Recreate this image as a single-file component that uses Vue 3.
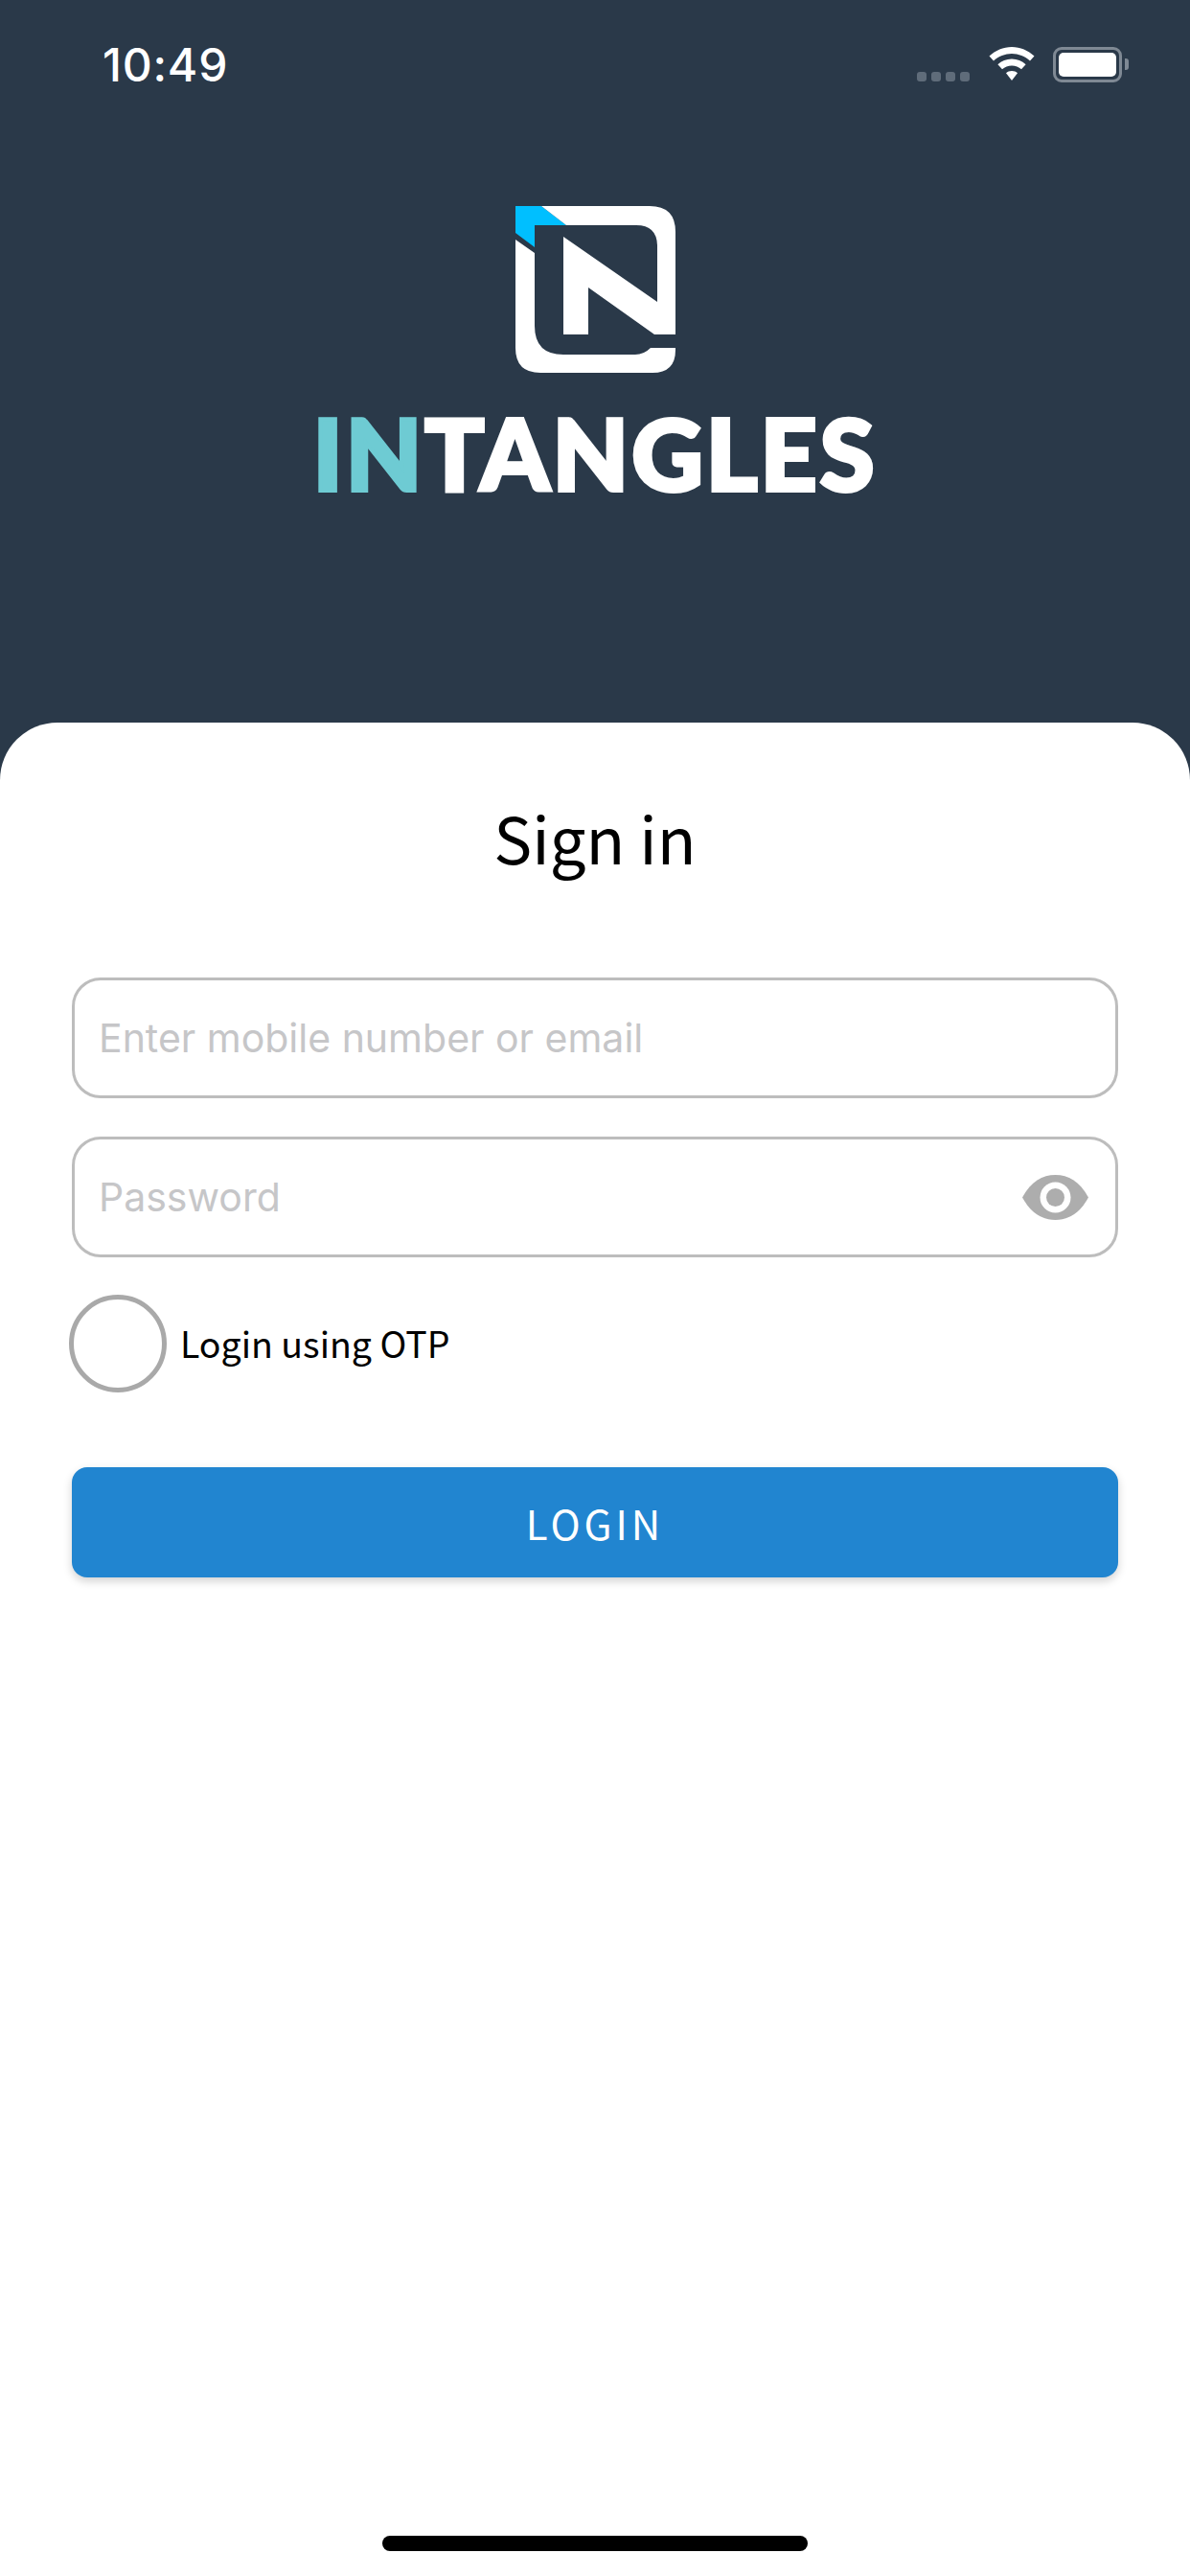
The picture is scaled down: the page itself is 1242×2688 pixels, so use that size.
<script setup>
const fields = [
  { placeholder: 'Enter mobile number or email', eye: false },
  { placeholder: 'Password', eye: true }
];
</script>

<template>
  <div class="screen">
    <header class="head">
      <div class="status">
        <span class="time">10:49</span>
        <div class="status-icons">
          <div class="signal"><i></i><i></i><i></i><i></i></div>
          <svg class="wifi" width="48" height="36" viewBox="0 0 48 36">
            <path fill="#fff" d="M24 0C33 0 41 3.600 47.500 9.500L43 14.500C37.800 9.800 31.200 7 24 7S10.200 9.800 5 14.500L.5 9.500C7 3.600 15 0 24 0Z" />
            <path fill="#fff" d="M24 12.500C29.600 12.500 34.700 14.600 38.600 18.200L34 23.200C31.300 20.800 27.800 19.400 24 19.400S16.700 20.800 14 23.200L9.400 18.200C13.300 14.600 18.400 12.500 24 12.500Z" />
            <path fill="#fff" d="M24 25C26.400 25 28.400 25.800 30 27.300L24 35L18 27.300C19.600 25.800 21.600 25 24 25Z" />
          </svg>
          <div class="battery"><span class="level"></span></div>
          <span class="nub"></span>
        </div>
      </div>
      <div class="brand">
        <svg class="mark" width="167" height="174" viewBox="0 0 167 174">
          <path fill="#00bfff" d="M0 0H27L53 20H20V43L0 28Z" />
          <path fill="#fff" d="M27 0H140Q167 0 167 27V134H145L76 85V134H50V32L148 100V42Q148 20 126 20H53Z" />
          <path fill="#fff" d="M0 35L20 49V125Q20 155 50 155H125Q134 155 141 148H167V150Q167 174 143 174H26Q0 174 0 148Z" />
        </svg>
        <div class="wordmark"><span class="accent">IN</span>TANGLES</div>
      </div>
    </header>

    <main class="card">
      <h1 class="title">Sign in</h1>
      <div v-for="field in fields" :key="field.placeholder" class="field">
        <span class="placeholder">{{ field.placeholder }}</span>
        <svg v-if="field.eye" class="eye" width="69" height="47" viewBox="0 0 69 47">
          <path fill="#adadad" d="M0 23.500C9 7 21 0 34.500 0S60 7 69 23.500C60 40 48 47 34.500 47S9 40 0 23.500Z" />
          <circle cx="34.500" cy="23.500" r="16" fill="#fff" />
          <circle cx="34.500" cy="23.500" r="9.500" fill="#adadad" />
        </svg>
      </div>
      <div class="otp">
        <span class="radio"></span>
        <span class="otp-label">Login using OTP</span>
      </div>
      <button class="login">LOGIN</button>
    </main>
    <div class="home-bar"></div>
  </div>
</template>

<style>
html, body {
  margin: 0;
  background: #fff;
}
</style>

<style scoped>
.screen {
  position: relative;
  width: 1242px;
  height: 2688px;
  background: #2a3949;
  display: flex;
  flex-direction: column;
  overflow: hidden;
}

.head {
  height: 754px;
  flex: none;
}

.status {
  display: flex;
  align-items: center;
  justify-content: space-between;
  height: 70px;
  padding: 32px 64px 0 107px;
}

.time {
  font-family: Inter, sans-serif;
  font-size: 48px;
  font-weight: 500;
  letter-spacing: 0.8px;
  color: #fff;
}

.status-icons {
  display: flex;
  align-items: center;
}

.signal {
  display: flex;
  gap: 5px;
  margin-top: 26px;
  margin-right: 20px;
}

.signal i {
  width: 10px;
  height: 10px;
  border-radius: 3px;
  background: #5f6c7a;
}

.wifi {
  margin-right: 19px;
}

.battery {
  width: 72px;
  height: 37px;
  box-sizing: border-box;
  border: 3px solid #7f8994;
  border-radius: 9px;
  padding: 3px;
}

.level {
  display: block;
  height: 100%;
  background: #fff;
  border-radius: 5px;
}

.nub {
  width: 4px;
  height: 12px;
  margin-left: 3px;
  background: #7f8994;
  border-radius: 0 3px 3px 0;
}

.brand {
  display: flex;
  flex-direction: column;
  align-items: center;
  padding-top: 113px;
}

.wordmark {
  margin-top: 28px;
  font-family: Lato, sans-serif;
  font-size: 103px;
  font-weight: 900;
  line-height: 110px;
  letter-spacing: 3px;
  -webkit-text-stroke: 4px currentColor;
  color: #fff;
}

.accent {
  color: #6ecbd3;
}

.card {
  flex: 1;
  background: #fff;
  border-radius: 60px 60px 0 0;
  padding: 70px 75px 0;
}

.title {
  margin: 0 0 98px;
  font-family: "Noto Sans CJK JP", sans-serif;
  font-size: 67px;
  font-weight: 400;
  line-height: 98px;
  text-align: center;
  color: #000;
}

.field {
  display: flex;
  align-items: center;
  justify-content: space-between;
  box-sizing: border-box;
  height: 126px;
  margin-bottom: 40px;
  padding: 0 28px 0 25px;
  border: 3px solid #bdbdbd;
  border-radius: 30px;
  background: #fff;
}

.placeholder {
  font-family: Inter, sans-serif;
  font-size: 41px;
  color: #c6c6c8;
}

.otp {
  display: flex;
  align-items: center;
  gap: 14px;
  margin: -1px 0 0 -3px;
}

.radio {
  width: 102px;
  height: 102px;
  box-sizing: border-box;
  border: 5px solid #a9a9a9;
  border-radius: 50%;
}

.otp-label {
  margin-bottom: 3px;
  font-family: "Noto Sans CJK JP", sans-serif;
  font-size: 37.5px;
  color: #000;
}

.login {
  display: block;
  width: 100%;
  height: 115px;
  margin-top: 78px;
  border: 0;
  border-radius: 16px;
  background: #2185d0;
  box-shadow: 0 4px 10px rgba(0, 0, 0, 0.18);
  font-family: "Noto Sans CJK JP", sans-serif;
  font-size: 42px;
  letter-spacing: 4px;
  color: #fff;
}

.home-bar {
  position: absolute;
  left: 399px;
  bottom: 26px;
  width: 444px;
  height: 16px;
  border-radius: 8px;
  background: #000;
}
</style>
